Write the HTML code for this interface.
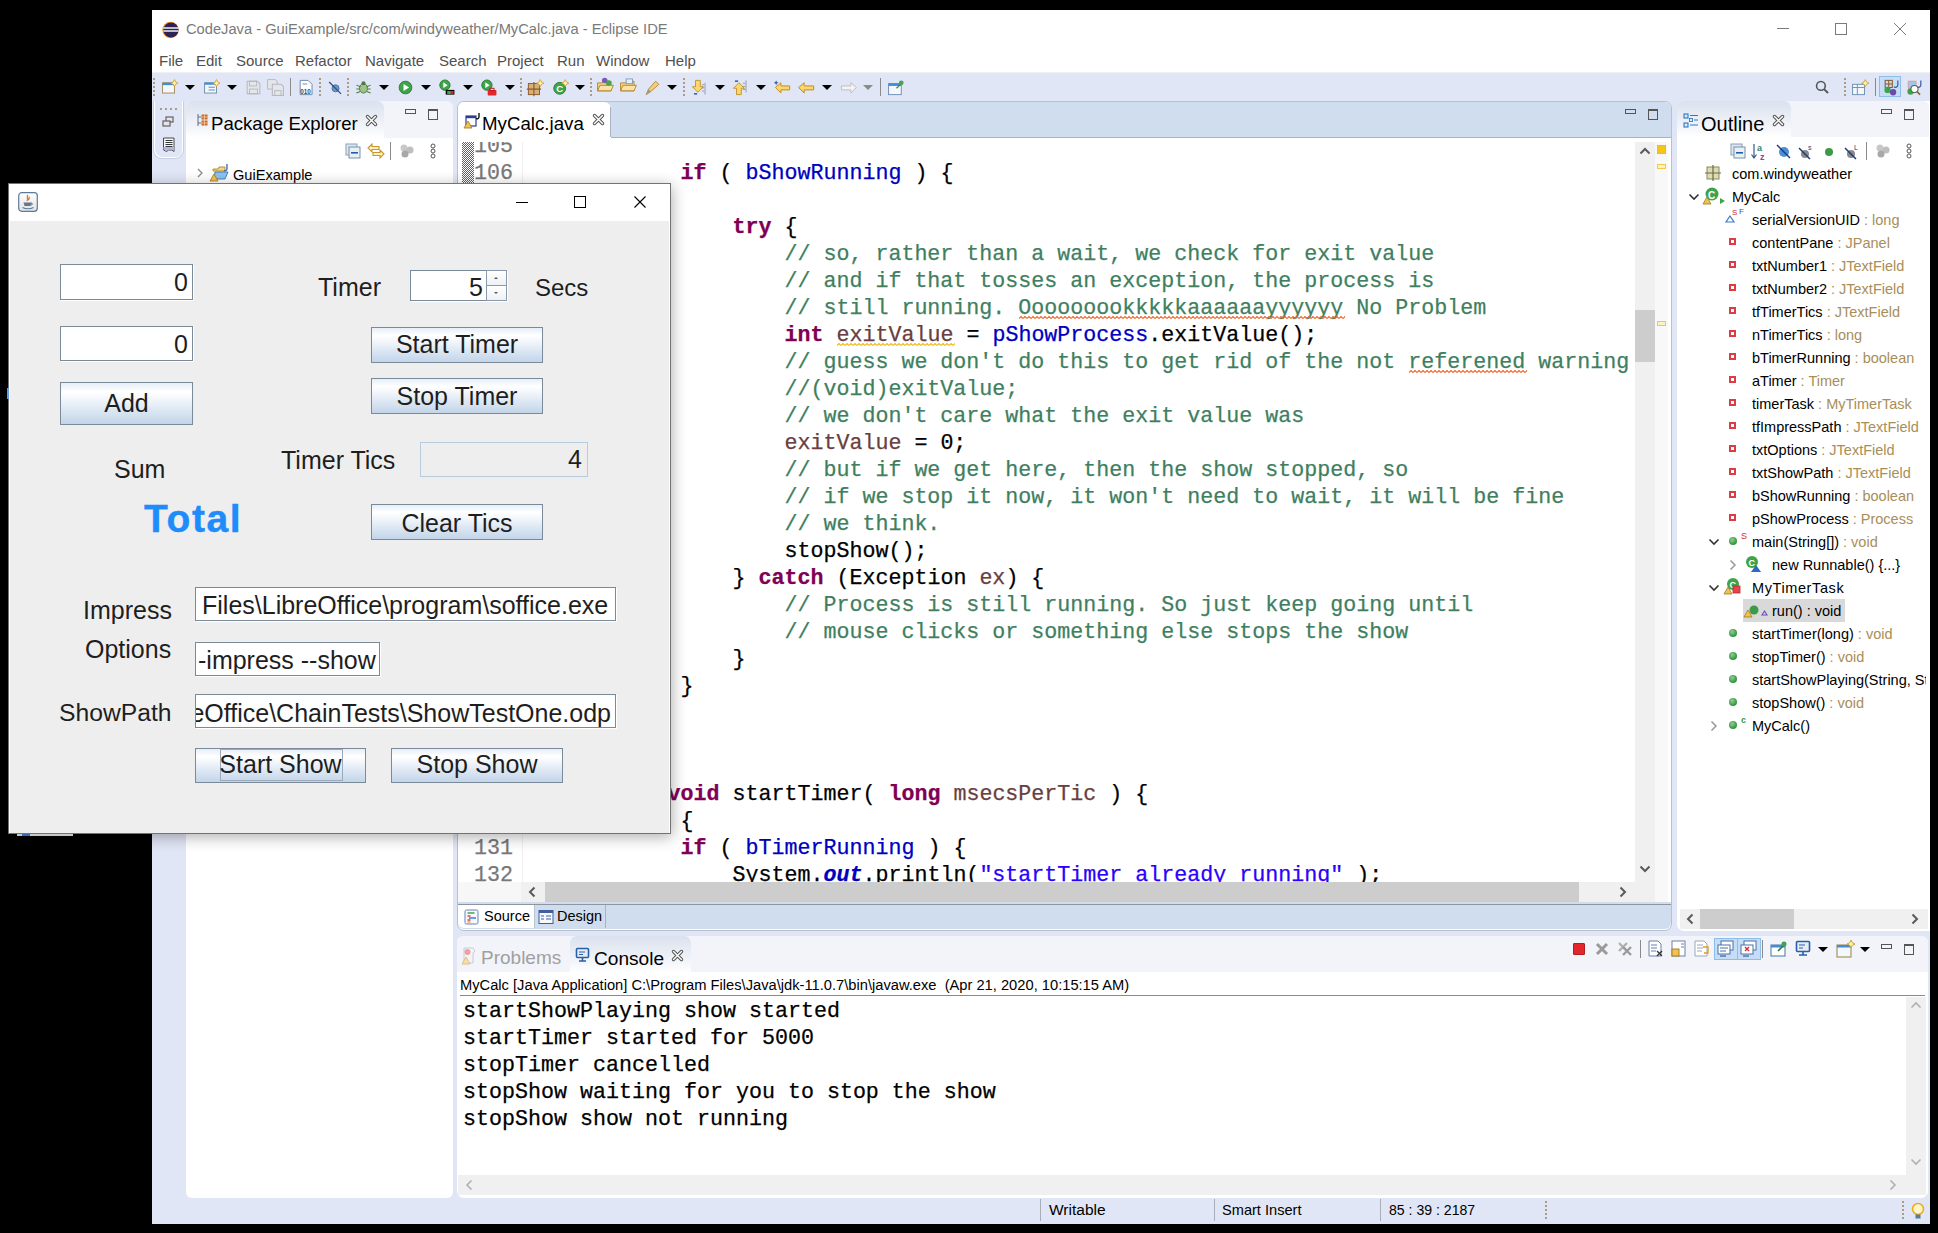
<!DOCTYPE html>
<html><head><meta charset="utf-8">
<style>
html,body{margin:0;padding:0;}
body{width:1938px;height:1233px;background:#000;position:relative;overflow:hidden;font-family:"Liberation Sans",sans-serif;}
.a{position:absolute;}
.t{position:absolute;white-space:pre;line-height:1;}
svg.i{position:absolute;overflow:visible;}
.menu{font-size:15px;color:#505050;top:53px;}
.part{background:#fff;border:1px solid #C9CED9;box-sizing:border-box;}
.ptabhdr{background:#F2F4FA;}
.seltab{background:linear-gradient(#DAE2EE,#F4F6FA 75%,#fff);}
.code{font-family:"Liberation Mono",monospace;font-size:21.67px;line-height:27px;white-space:pre;position:absolute;color:#000;-webkit-text-stroke:0.25px currentColor;}
.kw{color:#7F0055;font-weight:bold;}
.cm{color:#3F7F5F;}
.fd{color:#0000C0;}
.lv{color:#6A3E3E;}
.st{color:#2A00FF;}
.ln{color:#787878;}
.sq{}
.sqw{}
.ol{position:absolute;white-space:pre;line-height:1;font-size:14.5px;word-spacing:0px;color:#000;}
.ty{color:#A88E58;}
.dlg{font-size:25px;color:#1E1E1E;}
.tf{position:absolute;background:#fff;border:1px solid #7A8A99;box-sizing:border-box;overflow:hidden;box-shadow:1px 1px 0 #fff;}
.btn{position:absolute;border:1px solid #7A8A99;box-sizing:border-box;background:linear-gradient(#E6EEF8 0%,#FFFFFF 22%,#F2F6FB 40%,#D9E5F2 70%,#C3D5E9 100%);}
.tbsep{position:absolute;width:1px;background:#8A8A8A;}
.grip{position:absolute;width:2px;border-left:2px dotted #A79C84;}
.dd{position:absolute;width:0;height:0;border-left:5px solid transparent;border-right:5px solid transparent;border-top:5px solid #000;}

</style></head>
<body>
<!-- ECLIPSE WINDOW -->
<div class="a" style="left:152px;top:10px;width:1778px;height:1214px;background:#E1E6F6;"></div>
<div class="a" style="left:152px;top:10px;width:1778px;height:62px;background:#fff;"></div>
<div class="a" style="left:152px;top:72px;width:1778px;height:1px;background:#EEF0F6;"></div>
<!-- eclipse logo -->
<svg class="i" style="left:160px;top:20px;" width="20" height="20" viewBox="0 0 20 20">
<circle cx="10.5" cy="10" r="8.2" fill="#F7941E"/>
<circle cx="11" cy="10" r="7.6" fill="#2C2255"/>
<rect x="3.5" y="7.3" width="15" height="1.4" fill="#fff"/>
<rect x="3.5" y="10.3" width="15" height="1.4" fill="#fff"/>
</svg>
<div class="t" style="left:186px;top:22px;font-size:14.7px;color:#7a7a7a;">CodeJava - GuiExample/src/com/windyweather/MyCalc.java - Eclipse IDE</div>
<!-- window controls -->
<div class="a" style="left:1777px;top:28px;width:12px;height:1px;background:#7a7a7a;"></div>
<div class="a" style="left:1835px;top:23px;width:10px;height:10px;border:1px solid #7a7a7a;"></div>
<svg class="i" style="left:1894px;top:23px;" width="12" height="12" viewBox="0 0 12 12"><path d="M0 0L12 12M12 0L0 12" stroke="#7a7a7a" stroke-width="1"/></svg>
<!-- menu -->
<div class="t menu" style="left:159px;">File</div>
<div class="t menu" style="left:196px;">Edit</div>
<div class="t menu" style="left:236px;">Source</div>
<div class="t menu" style="left:295px;">Refactor</div>
<div class="t menu" style="left:365px;">Navigate</div>
<div class="t menu" style="left:439px;">Search</div>
<div class="t menu" style="left:497px;">Project</div>
<div class="t menu" style="left:557px;">Run</div>
<div class="t menu" style="left:596px;">Window</div>
<div class="t menu" style="left:665px;">Help</div>
<!-- status bar -->
<div class="a" style="left:1040px;top:1199px;width:1px;height:22px;background:#A8ADBA;"></div>
<div class="a" style="left:1214px;top:1199px;width:1px;height:22px;background:#A8ADBA;"></div>
<div class="a" style="left:1380px;top:1199px;width:1px;height:22px;background:#A8ADBA;"></div>
<div class="grip" style="left:1545px;top:1201px;height:18px;"></div>
<div class="grip" style="left:1902px;top:1201px;height:18px;"></div>
<div class="t" style="left:1049px;top:1202px;font-size:15.5px;color:#000;">Writable</div>
<div class="t" style="left:1222px;top:1202.5px;font-size:14.6px;color:#000;">Smart Insert</div>
<div class="t" style="left:1389px;top:1203px;font-size:14.1px;color:#000;">85 : 39 : 2187</div>
<svg class="i" style="left:1910px;top:1202px;" width="16" height="20" viewBox="0 0 16 20">
<circle cx="8" cy="7" r="5.5" fill="#FFF6C8" stroke="#F2A91E" stroke-width="1.5"/>
<rect x="5.5" y="12.5" width="5" height="4" fill="#5A7A95"/>
</svg>

<!-- MAIN TOOLBAR -->
<div class="grip" style="left:153px;top:78px;height:18px;"></div>
<!-- new wizard -->
<svg class="i" style="left:160.5px;top:77.5px;" width="19" height="19" viewBox="0 0 24 24">
<rect x="2" y="6" width="15" height="13" fill="#F4F8FC" stroke="#A08A52" stroke-width="1.2"/>
<rect x="2" y="6" width="15" height="3" fill="#3D8EDB"/>
<path d="M17 2l1.5 3 3 1.5-3 1.5-1.5 3-1.5-3-3-1.5 3-1.5z" fill="#FFF2A8" stroke="#C89A2A" stroke-width="1"/>
</svg>
<div class="dd" style="left:185px;top:85px;"></div>
<!-- new class-ish -->
<svg class="i" style="left:202.5px;top:77.5px;" width="19" height="19" viewBox="0 0 24 24">
<rect x="2" y="6" width="15" height="13" fill="#F4F8FC" stroke="#6C8FB5" stroke-width="1.2"/>
<rect x="2" y="6" width="15" height="2.5" fill="#3D8EDB"/>
<rect x="7" y="11" width="8" height="1.3" fill="#6C8FB5"/><rect x="7" y="14.5" width="8" height="1.3" fill="#6C8FB5"/>
<path d="M17 2l1.5 3 3 1.5-3 1.5-1.5 3-1.5-3-3-1.5 3-1.5z" fill="#FFF2A8" stroke="#C89A2A" stroke-width="1"/>
</svg>
<div class="dd" style="left:227px;top:85px;"></div>
<!-- save (disabled) -->
<svg class="i" style="left:243.5px;top:77.5px;" width="19" height="19" viewBox="0 0 24 24">
<path d="M4 4h13l3 3v13H4z" fill="#E4E6EC" stroke="#B6B8BE" stroke-width="1.3"/>
<rect x="7" y="4" width="9" height="6" fill="none" stroke="#B6B8BE" stroke-width="1.2"/>
<rect x="7" y="14" width="10" height="6" fill="none" stroke="#B6B8BE" stroke-width="1.2"/>
</svg>
<svg class="i" style="left:265.5px;top:77.5px;" width="19" height="19" viewBox="0 0 24 24">
<path d="M2 2h10l2 2v10H2z" fill="#E4E6EC" stroke="#B6B8BE" stroke-width="1.2"/>
<path d="M8 8h11l3 3v11H8z" fill="#E4E6EC" stroke="#B6B8BE" stroke-width="1.3"/>
<rect x="11" y="16" width="8" height="6" fill="none" stroke="#B6B8BE" stroke-width="1.2"/>
</svg>
<div class="tbsep" style="left:290px;top:78px;height:18px;"></div>
<!-- 010 -->
<svg class="i" style="left:296.5px;top:77.5px;" width="19" height="19" viewBox="0 0 24 24">
<path d="M4 3h10l5 5v13H4z" fill="#fff" stroke="#6A87A8" stroke-width="1.2"/>
<rect x="7" y="7" width="6" height="1.2" fill="#6A87A8"/>
<text x="4" y="20" font-family="Liberation Sans" font-size="8" font-weight="bold" fill="#2E4A78">010</text>
</svg>
<div class="grip" style="left:319px;top:78px;height:18px;"></div>
<!-- skip breakpoints -->
<svg class="i" style="left:325.5px;top:77.5px;" width="19" height="19" viewBox="0 0 24 24">
<circle cx="12" cy="13" r="4.5" fill="#6E93C4" stroke="#3E6AA0" stroke-width="1"/>
<path d="M4 5L19 20" stroke="#2A4F86" stroke-width="1.6"/>
</svg>
<div class="grip" style="left:347px;top:78px;height:18px;"></div>
<!-- debug -->
<svg class="i" style="left:353.5px;top:77.5px;" width="19" height="19" viewBox="0 0 24 24">
<ellipse cx="12" cy="13" rx="5" ry="6" fill="#9DC58A" stroke="#4E7A3C" stroke-width="1.2"/>
<circle cx="12" cy="6.5" r="2.5" fill="#4E7A3C"/>
<path d="M3 9l5 2M3 14h4M3 19l5-2M21 9l-5 2M21 14h-4M21 19l-5-2" stroke="#4E7A3C" stroke-width="1.3"/>
</svg>
<div class="dd" style="left:379px;top:85px;"></div>
<!-- run -->
<svg class="i" style="left:395.5px;top:77.5px;" width="19" height="19" viewBox="0 0 24 24">
<circle cx="12" cy="12" r="8" fill="#3EA34A" stroke="#27812F" stroke-width="1.2"/>
<path d="M9.5 7.5v9l7-4.5z" fill="#fff"/>
</svg>
<div class="dd" style="left:421px;top:85px;"></div>
<!-- coverage -->
<svg class="i" style="left:436.5px;top:77.5px;" width="19" height="19" viewBox="0 0 24 24">
<circle cx="10" cy="9" r="6.5" fill="#3EA34A" stroke="#27812F" stroke-width="1.2"/>
<path d="M8 5.5v7l5.5-3.5z" fill="#fff"/>
<rect x="11" y="15" width="11" height="6" fill="#000"/><rect x="13" y="16.5" width="8" height="3.5" fill="#E3262B"/><rect x="13" y="16.5" width="4" height="3.5" fill="#32B34A"/>
</svg>
<div class="dd" style="left:463px;top:85px;"></div>
<!-- external tools -->
<svg class="i" style="left:478.5px;top:77.5px;" width="19" height="19" viewBox="0 0 24 24">
<circle cx="10" cy="9" r="6.5" fill="#3EA34A" stroke="#27812F" stroke-width="1.2"/>
<path d="M8 5.5v7l5.5-3.5z" fill="#fff"/>
<rect x="11" y="15" width="11" height="7" rx="1" fill="#E3262B"/><rect x="14" y="13" width="5" height="3" fill="none" stroke="#B41C20" stroke-width="1.2"/>
</svg>
<div class="dd" style="left:505px;top:85px;"></div>
<div class="grip" style="left:520px;top:78px;height:18px;"></div>
<!-- new package -->
<svg class="i" style="left:525.5px;top:77.5px;" width="19" height="19" viewBox="0 0 24 24">
<rect x="3" y="7" width="14" height="14" fill="#D6B07A" stroke="#8C5A26" stroke-width="1.2"/>
<path d="M10 5v18M1 14h18" stroke="#8C5A26" stroke-width="1.4"/>
<path d="M18 2l1.5 3 3 1.5-3 1.5-1.5 3-1.5-3-3-1.5 3-1.5z" fill="#FFF2A8" stroke="#C89A2A" stroke-width="1"/>
</svg>
<!-- new class C -->
<svg class="i" style="left:550.5px;top:77.5px;" width="19" height="19" viewBox="0 0 24 24">
<circle cx="11" cy="13" r="7.5" fill="#3EA34A" stroke="#27812F" stroke-width="1.2"/>
<text x="6.5" y="17.5" font-family="Liberation Sans" font-size="12" font-weight="bold" fill="#fff">C</text>
<path d="M18 2l1.5 3 3 1.5-3 1.5-1.5 3-1.5-3-3-1.5 3-1.5z" fill="#FFF2A8" stroke="#C89A2A" stroke-width="1"/>
</svg>
<div class="dd" style="left:575px;top:85px;"></div>
<div class="grip" style="left:590px;top:78px;height:18px;"></div>
<!-- open type -->
<svg class="i" style="left:595.5px;top:74.5px;" width="19" height="19" viewBox="0 0 24 24">
<path d="M2 10h6l2-2h9v12H2z" fill="#F7D58E" stroke="#B3852F" stroke-width="1.2"/>
<path d="M2 20l3-7h17l-3 7z" fill="#FBE3A8" stroke="#B3852F" stroke-width="1.2"/>
<circle cx="11" cy="7" r="3.5" fill="#7A5AB5"/><circle cx="16" cy="10" r="3.5" fill="#4BA34E"/>
</svg>
<!-- open task -->
<svg class="i" style="left:618.5px;top:74.5px;" width="19" height="19" viewBox="0 0 24 24">
<path d="M2 10h6l2-2h9v12H2z" fill="#F7D58E" stroke="#B3852F" stroke-width="1.2"/>
<path d="M2 20l3-7h17l-3 7z" fill="#FBE3A8" stroke="#B3852F" stroke-width="1.2"/>
<rect x="9" y="5" width="8" height="6" fill="#E8EEF6" stroke="#6C8FB5" stroke-width="1"/>
</svg>
<!-- search pen -->
<svg class="i" style="left:642.5px;top:77.5px;" width="19" height="19" viewBox="0 0 24 24">
<path d="M4 21l3-7 9-10 4 4-10 9z" fill="#F2CD7A" stroke="#B3852F" stroke-width="1.1"/>
<path d="M4 21l3-7 3 3z" fill="#9A9A9A"/>
</svg>
<div class="dd" style="left:667px;top:85px;"></div>
<div class="grip" style="left:683px;top:78px;height:18px;"></div>
<!-- next annotation -->
<svg class="i" style="left:689.5px;top:77.5px;" width="19" height="19" viewBox="0 0 24 24">
<path d="M7 3h6v8h4l-7 7-7-7h4z" fill="#FBD86B" stroke="#C08A1E" stroke-width="1.1"/>
<rect x="5" y="19" width="4" height="2" fill="#3A63A8"/>
<path d="M19 6v15" stroke="#8090A8" stroke-width="1"/>
<rect x="15" y="8" width="3" height="1" fill="#8090A8"/><rect x="15" y="12" width="3" height="1" fill="#8090A8"/><rect x="15" y="16" width="3" height="1" fill="#8090A8"/>
</svg>
<div class="dd" style="left:715px;top:85px;"></div>
<!-- prev annotation -->
<svg class="i" style="left:730.5px;top:77.5px;" width="19" height="19" viewBox="0 0 24 24">
<path d="M7 21h6v-8h4l-7-7-7 7h4z" fill="#FBD86B" stroke="#C08A1E" stroke-width="1.1"/>
<rect x="5" y="3" width="4" height="2" fill="#3A63A8"/>
<path d="M19 3v15" stroke="#8090A8" stroke-width="1"/>
<rect x="15" y="6" width="3" height="1" fill="#8090A8"/><rect x="15" y="10" width="3" height="1" fill="#8090A8"/><rect x="15" y="14" width="3" height="1" fill="#8090A8"/>
</svg>
<div class="dd" style="left:756px;top:85px;"></div>
<!-- last edit -->
<svg class="i" style="left:772.5px;top:77.5px;" width="19" height="19" viewBox="0 0 24 24">
<path d="M3 12l7-6v4h11v5H10v4z" fill="#FBD86B" stroke="#C08A1E" stroke-width="1.2"/>
<path d="M4 3l1 2 2 1-2 1-1 2-1-2-2-1 2-1z" fill="#3A63A8"/>
</svg>
<!-- back -->
<svg class="i" style="left:796.5px;top:77.5px;" width="19" height="19" viewBox="0 0 24 24">
<path d="M2 12l7-6v4h12v5H9v4z" fill="#FBD86B" stroke="#C08A1E" stroke-width="1.2"/>
</svg>
<div class="dd" style="left:822px;top:85px;"></div>
<!-- forward disabled -->
<svg class="i" style="left:838.5px;top:77.5px;" width="19" height="19" viewBox="0 0 24 24">
<path d="M22 12l-7-6v4H3v5h12v4z" fill="#F3F3F3" stroke="#BDBDBD" stroke-width="1.2"/>
</svg>
<div class="dd" style="left:863px;top:85px;border-top-color:#8A8A8A;"></div>
<div class="tbsep" style="left:880px;top:78px;height:18px;"></div>
<!-- pin editor -->
<svg class="i" style="left:886.5px;top:77.5px;" width="19" height="19" viewBox="0 0 24 24">
<rect x="2" y="7" width="16" height="14" fill="#F4F8FC" stroke="#6C8FB5" stroke-width="1.2"/>
<rect x="2" y="7" width="16" height="3" fill="#3D8EDB"/>
<path d="M12 13l5-5" stroke="#3E7A3A" stroke-width="1.5"/><circle cx="18" cy="6" r="3" fill="#4BA34E"/>
</svg>
<!-- right side -->
<svg class="i" style="left:1812.5px;top:77.5px;" width="19" height="19" viewBox="0 0 24 24">
<circle cx="10" cy="10" r="5.5" fill="none" stroke="#555" stroke-width="2"/>
<path d="M14 14l5 5" stroke="#555" stroke-width="2.4"/>
</svg>
<div class="grip" style="left:1844px;top:78px;height:18px;"></div>
<svg class="i" style="left:1850.5px;top:77.5px;" width="19" height="19" viewBox="0 0 24 24">
<rect x="2" y="8" width="15" height="13" fill="#F4F8FC" stroke="#6C8FB5" stroke-width="1.2"/>
<path d="M2 12h15M8 8v13" stroke="#6C8FB5" stroke-width="1.2"/>
<path d="M18 2l1.5 3 3 1.5-3 1.5-1.5 3-1.5-3-3-1.5 3-1.5z" fill="#FFF2A8" stroke="#C89A2A" stroke-width="1"/>
</svg>
<div class="tbsep" style="left:1875px;top:78px;height:18px;"></div>
<div class="a" style="left:1879px;top:76px;width:22px;height:21px;background:#C5DDF6;border:1px solid #8DBDEB;box-sizing:border-box;"></div>
<svg class="i" style="left:1881.5px;top:77.5px;" width="19" height="19" viewBox="0 0 24 24">
<rect x="4" y="3" width="9" height="9" fill="none" stroke="#8C5A26" stroke-width="1.3"/><path d="M8.5 3v9M4 7.5h9" stroke="#8C5A26" stroke-width="1.3"/>
<path d="M20 3v6a3 3 0 0 1-5 2" fill="none" stroke="#3A63A8" stroke-width="1.6"/>
<circle cx="7" cy="15" r="4" fill="#3EA34A"/><circle cx="14" cy="18" r="4" fill="#6A4BA5"/>
</svg>
<svg class="i" style="left:1904.5px;top:77.5px;" width="19" height="19" viewBox="0 0 24 24">
<path d="M4 4h10v9H4z" fill="#9CC8EE" stroke="#E8928A" stroke-width="1"/>
<path d="M20 3v6a3 3 0 0 1-5 2" fill="none" stroke="#3A63A8" stroke-width="1.6"/>
<circle cx="7" cy="17" r="4" fill="#3EA34A"/>
<circle cx="12" cy="14" r="4.5" fill="#fff" stroke="#4A6A4A" stroke-width="1.3"/><path d="M15 17l4 4" stroke="#8A5A3A" stroke-width="2"/>
</svg>

<!-- LEFT TRIM STACK -->
<div class="a" style="left:153px;top:101px;width:31px;height:58px;background:#E1E6F6;border:1px solid #C9CEDC;border-top:none;border-radius:0 0 9px 9px;box-sizing:border-box;box-shadow:inset 1px -1px 0 #fff, inset -1px 0 0 #fff;"></div>
<div class="a" style="left:160px;top:107.5px;width:2px;height:2px;background:#A89E88;"></div><div class="a" style="left:165px;top:107.5px;width:2px;height:2px;background:#A89E88;"></div><div class="a" style="left:170px;top:107.5px;width:2px;height:2px;background:#A89E88;"></div><div class="a" style="left:175px;top:107.5px;width:2px;height:2px;background:#A89E88;"></div>
<svg class="i" style="left:162px;top:116px;" width="12" height="12" viewBox="0 0 12 12">
<rect x="4" y="1" width="7" height="5" fill="none" stroke="#6B6055" stroke-width="1.2"/>
<rect x="1" y="5" width="7" height="5" fill="#E1E6F6" stroke="#6B6055" stroke-width="1.2"/>
</svg>
<svg class="i" style="left:162px;top:137px;" width="14" height="16" viewBox="0 0 14 16">
<path d="M1.5 1h10.5v13.5l-2-1.5h-3.5l-2 1.5-3-1.5z" fill="#F4F4FA" stroke="#4A4A4A" stroke-width="1"/>
<path d="M1.5 10h10.5v3.5l-2-1-3.5 0-2 1.5-3-1.5z" fill="#B8B4E0"/>
<path d="M3.5 3.5h7M3.5 5.5h7M3.5 7.5h7M3.5 9.5h7" stroke="#222" stroke-width="0.9"/>
</svg>

<!-- PACKAGE EXPLORER -->
<div class="a" style="left:186px;top:101px;width:267px;height:1097px;background:#fff;border-radius:7px 7px 6px 6px;"></div>
<div class="a ptabhdr" style="left:186px;top:101px;width:267px;height:37px;border-radius:7px 7px 0 0;"></div>
<div class="a seltab" style="left:186px;top:101px;width:198px;height:37px;border-radius:7px 7px 0 0;"></div>
<!-- pkg explorer icon -->
<svg class="i" style="left:196px;top:113px;" width="14" height="14" viewBox="0 0 14 14">
<path d="M2 1v12" stroke="#5A6A8A" stroke-width="1"/><path d="M2 4h3M2 10h3" stroke="#5A6A8A" stroke-width="1"/>
<rect x="5.5" y="1.5" width="6" height="5" fill="#C86A2A"/><rect x="5.5" y="7.5" width="6" height="5" fill="#C86A2A"/>
<path d="M8.5 1.5v11M5.5 4h6M5.5 10h6" stroke="#F2D2A8" stroke-width="0.8"/>
</svg>
<div class="t" style="left:211px;top:115px;font-size:18.6px;color:#000;">Package Explorer</div>
<svg class="i" style="left:366px;top:115px;" width="11" height="11" viewBox="0 0 11 11"><path d="M1.5 1.5L9.5 9.5M9.5 1.5L1.5 9.5" stroke="#505050" stroke-width="3.4" stroke-linecap="round"/><path d="M1.5 1.5L9.5 9.5M9.5 1.5L1.5 9.5" stroke="#fff" stroke-width="1.5" stroke-linecap="round"/></svg>
<div class="a" style="left:405px;top:109px;width:9px;height:3px;border:1px solid #555;"></div>
<div class="a" style="left:428px;top:109px;width:8px;height:8px;border:1px solid #555;border-top-width:2px;"></div>
<!-- pkg toolbar -->
<svg class="i" style="left:345px;top:143px;" width="16" height="16" viewBox="0 0 16 16">
<rect x="1" y="1" width="11" height="11" fill="#DDE6EE" stroke="#8AA0B8" stroke-width="1"/>
<rect x="4" y="4" width="11" height="11" fill="#E8F0F4" stroke="#7A90AC" stroke-width="1"/>
<rect x="6" y="9" width="7" height="1.6" fill="#1F5FA8"/>
</svg>
<svg class="i" style="left:367px;top:143px;" width="18" height="16" viewBox="0 0 18 16">
<path d="M1 5l4-4v2.5h7v3H5V9z" fill="#FDF0C0" stroke="#C8962E" stroke-width="1.1"/>
<path d="M17 11l-4-4v2.5H6v3h7V15z" fill="#FDF0C0" stroke="#C8962E" stroke-width="1.1"/>
</svg>
<div class="tbsep" style="left:390px;top:142px;height:18px;"></div>
<svg class="i" style="left:399px;top:144px;" width="16" height="14" viewBox="0 0 16 14">
<circle cx="5" cy="4" r="3.5" fill="#C8C8C8"/><circle cx="11" cy="6" r="3.5" fill="#BEBEBE"/><circle cx="6" cy="10" r="3.5" fill="#A8A8A8"/>
</svg>
<svg class="i" style="left:429px;top:143px;" width="8" height="16" viewBox="0 0 8 16">
<circle cx="4" cy="3" r="2" fill="none" stroke="#555" stroke-width="1"/><circle cx="4" cy="8" r="2" fill="none" stroke="#555" stroke-width="1"/><circle cx="4" cy="13" r="2" fill="none" stroke="#555" stroke-width="1"/>
</svg>
<!-- tree -->
<svg class="i" style="left:196px;top:167px;" width="8" height="12" viewBox="0 0 8 12"><path d="M2 2l4 4-4 4" fill="none" stroke="#8A8A8A" stroke-width="1.3"/></svg>
<svg class="i" style="left:210px;top:163px;" width="20" height="20" viewBox="0 0 20 20">
<path d="M3 6h5l1-2h6v4H3z" fill="#F2D28A" stroke="#B3852F" stroke-width="0.9"/>
<path d="M5 9h13l-3 7H4z" fill="#8EC2EC" stroke="#3A78B5" stroke-width="0.9"/>
<path d="M17 1v5a2 2 0 0 1-3 1.5" fill="none" stroke="#3A63A8" stroke-width="1.3"/>
<path d="M4 11l4 7H0z" fill="#F2C14E" stroke="#A07A1E" stroke-width="0.8"/>
</svg>
<div class="t" style="left:233px;top:168px;font-size:14.6px;color:#000;">GuiExample</div>

<!-- EDITOR -->
<div class="a" style="left:457px;top:101px;width:1215px;height:830px;background:#fff;border:1px solid #B9BFCC;border-radius:7px;box-sizing:border-box;"></div>
<div class="a" style="left:458px;top:102px;width:1213px;height:36px;background:#CFDDEE;border-radius:6px 6px 0 0;"></div>
<div class="a" style="left:458px;top:137px;width:1213px;height:1px;background:#A9B3C3;"></div>
<div class="a" style="left:458px;top:102px;width:153px;height:36px;background:#fff;border-radius:6px 7px 0 0;"></div>
<div class="a" style="left:610px;top:107px;width:1px;height:30px;background:#A9B3C3;"></div>
<svg class="i" style="left:464px;top:113px;" width="18" height="18" viewBox="0 0 18 18">
<rect x="2" y="3" width="10" height="10" fill="#fff" stroke="#2A3F8F" stroke-width="1.2"/>
<rect x="2" y="3" width="10" height="2.2" fill="#2A3F8F"/>
<path d="M15 0v4a2 2 0 0 1-3 1.5" fill="none" stroke="#000" stroke-width="1.3"/>
<path d="M4 8l4 7H0z" fill="#F2C14E" stroke="#A07A1E" stroke-width="0.8"/>
</svg>
<div class="t" style="left:482px;top:114.5px;font-size:18.7px;color:#000;">MyCalc.java</div>
<svg class="i" style="left:593px;top:114px;" width="11" height="11" viewBox="0 0 11 11"><path d="M1.5 1.5L9.5 9.5M9.5 1.5L1.5 9.5" stroke="#505050" stroke-width="3.4" stroke-linecap="round"/><path d="M1.5 1.5L9.5 9.5M9.5 1.5L1.5 9.5" stroke="#fff" stroke-width="1.5" stroke-linecap="round"/></svg>
<div class="a" style="left:1625px;top:109px;width:9px;height:3px;border:1px solid #555;"></div>
<div class="a" style="left:1648px;top:109px;width:8px;height:8px;border:1px solid #555;border-top-width:2px;"></div>
<!-- range indicator -->
<div class="a" style="left:462px;top:142px;width:12px;height:48px;background-color:#fff;background-image:linear-gradient(45deg,#1C6FD0 25%,transparent 25%,transparent 75%,#1C6FD0 75%),linear-gradient(45deg,#1C6FD0 25%,transparent 25%,transparent 75%,#1C6FD0 75%);background-size:2px 2px;background-position:0 0,1px 1px;"></div>
<div class="a" style="left:522px;top:142px;width:1px;height:740px;background:#F0F0F0;"></div>
<!-- code -->
<div class="a" style="left:458px;top:142px;width:1177px;height:740px;overflow:hidden;">
<div class="code ln" style="left:16px;top:-9.5px;">105
106
   
   
   
   
   
   
   
   
   
   
   
   
   
   
   
   
   
   
   
   
   
   
   
   
131
132</div>
<div class="code" style="left:66.5px;top:-9.5px;">
            <span class="kw">if</span> ( <span class="fd">bShowRunning</span> ) {

                <span class="kw">try</span> {
<span class="cm">                    // so, rather than a wait, we check for exit value</span>
<span class="cm">                    // and if that tosses an exception, the process is</span>
<span class="cm">                    // still running. <span class="sq">Ooooooookkkkkaaaaaayyyyyy</span> No Problem</span>
                    <span class="kw">int</span> <span class="lv sqw">exitValue</span> = <span class="fd">pShowProcess</span>.exitValue();
<span class="cm">                    // guess we don't do this to get rid of the not <span class="sq">referened</span> warning</span>
<span class="cm">                    //(void)exitValue;</span>
<span class="cm">                    // we don't care what the exit value was</span>
                    <span class="lv">exitValue</span> = 0;
<span class="cm">                    // but if we get here, then the show stopped, so</span>
<span class="cm">                    // if we stop it now, it won't need to wait, it will be fine</span>
<span class="cm">                    // we think.</span>
                    stopShow();
                } <span class="kw">catch</span> (Exception <span class="lv">ex</span>) {
<span class="cm">                    // Process is still running. So just keep going until</span>
<span class="cm">                    // mouse clicks or something else stops the show</span>
                }
            }
        }


    <span class="kw">public</span> <span class="kw">void</span> startTimer( <span class="kw">long</span> <span class="lv">msecsPerTic</span> ) {
            {
            <span class="kw">if</span> ( <span class="fd">bTimerRunning</span> ) {
                System.<span class="fd" style="font-style:italic;font-weight:bold;">out</span>.println(<span class="st">"startTimer already running"</span> );
</div>
</div>
<!-- squiggles -->
<svg class="i" style="left:0;top:0;" width="0" height="0"><defs>
<pattern id="zzr" width="4" height="3" patternUnits="userSpaceOnUse"><path d="M0 2.5L2 0.5L4 2.5" stroke="#F26A30" fill="none" stroke-width="1.2"/></pattern>
<pattern id="zzy" width="4" height="3" patternUnits="userSpaceOnUse"><path d="M0 2.5L2 0.5L4 2.5" stroke="#F0BC1A" fill="none" stroke-width="1.2"/></pattern>
</defs></svg>
<svg class="i" style="left:1019px;top:316px;" width="326" height="3"><rect width="326" height="3" fill="url(#zzr)"/></svg>
<svg class="i" style="left:837px;top:343px;" width="118" height="3"><rect width="118" height="3" fill="url(#zzy)"/></svg>
<svg class="i" style="left:1409px;top:370px;" width="118" height="3"><rect width="118" height="3" fill="url(#zzr)"/></svg>
<!-- v scrollbar -->
<div class="a" style="left:1635px;top:142px;width:20px;height:740px;background:#F0F0F0;"></div>
<svg class="i" style="left:1639px;top:146px;" width="12" height="10" viewBox="0 0 12 10"><path d="M1.5 7.5L6 3l4.5 4.5" fill="none" stroke="#5A5A5A" stroke-width="2"/></svg>
<div class="a" style="left:1635px;top:310px;width:20px;height:52px;background:#CDCDCD;"></div>
<svg class="i" style="left:1639px;top:864px;" width="12" height="10" viewBox="0 0 12 10"><path d="M1.5 2.5L6 7l4.5-4.5" fill="none" stroke="#5A5A5A" stroke-width="2"/></svg>
<!-- overview ruler -->
<div class="a" style="left:1655px;top:142px;width:13px;height:760px;background:#F8F8F8;"></div>
<div class="a" style="left:1657px;top:145px;width:9px;height:9px;background:#F5C518;border:1px solid #B8B8B8;box-sizing:border-box;"></div>
<div class="a" style="left:1657px;top:164px;width:9px;height:5px;background:#FFF2C2;border:1px solid #F0C94A;box-sizing:border-box;"></div>
<div class="a" style="left:1657px;top:321px;width:9px;height:5px;background:#FFF2C2;border:1px solid #F0C94A;box-sizing:border-box;"></div>
<!-- h scrollbar -->
<div class="a" style="left:521px;top:882px;width:1134px;height:20px;background:#F0F0F0;"></div>
<div class="a" style="left:458px;top:882px;width:63px;height:20px;background:#F7F7F7;"></div>
<svg class="i" style="left:527px;top:886px;" width="10" height="12" viewBox="0 0 10 12"><path d="M7.5 1.5L3 6l4.5 4.5" fill="none" stroke="#5A5A5A" stroke-width="2"/></svg>
<div class="a" style="left:545px;top:882px;width:1034px;height:20px;background:#CDCDCD;"></div>
<svg class="i" style="left:1618px;top:886px;" width="10" height="12" viewBox="0 0 10 12"><path d="M2.5 1.5L7 6l-4.5 4.5" fill="none" stroke="#5A5A5A" stroke-width="2"/></svg>
<!-- source/design tabs -->
<div class="a" style="left:458px;top:902px;width:1213px;height:27px;background:#CFDDEE;border-radius:0 0 6px 6px;"></div>
<div class="a" style="left:458px;top:904px;width:1213px;height:1px;background:#8E959F;"></div>
<div class="a" style="left:458px;top:905px;width:76px;height:23px;background:#fff;border-right:1px solid #B9C3D0;border-radius:0 0 0 6px;"></div>
<div class="a" style="left:535px;top:905px;width:70px;height:23px;border-right:1px solid #A9B3C3;"></div>
<svg class="i" style="left:464px;top:909px;" width="16" height="16" viewBox="0 0 16 16">
<rect x="1" y="1" width="13" height="14" rx="1.5" fill="#F6F8FC" stroke="#6A80B8" stroke-width="1"/>
<path d="M3.5 4h7" stroke="#1E9A3A" stroke-width="1.3"/><path d="M3.5 7h3" stroke="#D9262A" stroke-width="1.3"/><path d="M5 9h7" stroke="#1E6AD9" stroke-width="1.3"/><path d="M3.5 11h3" stroke="#D9262A" stroke-width="1.3"/><path d="M3.5 13h3" stroke="#E8A21E" stroke-width="1.3"/>
</svg>
<div class="t" style="left:484px;top:909px;font-size:14.5px;color:#000;">Source</div>
<svg class="i" style="left:538px;top:909px;" width="16" height="16" viewBox="0 0 16 16">
<rect x="1" y="1.5" width="14" height="13" fill="#F6F8FC" stroke="#3E5E9E" stroke-width="1"/>
<rect x="1" y="1.5" width="14" height="2.5" fill="#3E5E9E"/>
<path d="M3 7h3M3 10h3M8 7h5M8 10h5" stroke="#3E5E9E" stroke-width="1.1"/>
</svg>
<div class="t" style="left:557px;top:909px;font-size:14.5px;color:#000;">Design</div>

<!-- OUTLINE -->
<div class="a" style="left:1677px;top:101px;width:253px;height:830px;background:#fff;border-radius:7px 0 0 7px;box-sizing:border-box;"></div>
<div class="a ptabhdr" style="left:1677px;top:101px;width:252px;height:36px;border-radius:6px 6px 0 0;"></div>
<div class="a seltab" style="left:1677px;top:101px;width:114px;height:36px;border-radius:6px 7px 0 0;"></div>
<svg class="i" style="left:1683px;top:113px;" width="16" height="16" viewBox="0 0 16 16">
<rect x="1" y="1" width="4" height="4" fill="#D6E8F8" stroke="#2A78C8" stroke-width="1.1"/>
<rect x="1" y="10" width="4" height="4" fill="#D6E8F8" stroke="#2A78C8" stroke-width="1.1"/>
<rect x="6.5" y="5.5" width="3" height="3" fill="none" stroke="#2A78C8" stroke-width="0.9"/>
<path d="M7 2.5h8M11 7h4M7 12h8" stroke="#2A78C8" stroke-width="1.1"/>
</svg>
<div class="t" style="left:1701px;top:113.5px;font-size:20px;color:#000;">Outline</div>
<svg class="i" style="left:1773px;top:115px;" width="11" height="11" viewBox="0 0 11 11"><path d="M1.5 1.5L9.5 9.5M9.5 1.5L1.5 9.5" stroke="#505050" stroke-width="3.4" stroke-linecap="round"/><path d="M1.5 1.5L9.5 9.5M9.5 1.5L1.5 9.5" stroke="#fff" stroke-width="1.5" stroke-linecap="round"/></svg>
<div class="a" style="left:1881px;top:109px;width:9px;height:3px;border:1px solid #555;"></div>
<div class="a" style="left:1904px;top:109px;width:8px;height:8px;border:1px solid #555;border-top-width:2px;"></div>
<!-- outline toolbar -->
<svg class="i" style="left:1730px;top:143px;" width="16" height="16" viewBox="0 0 16 16">
<rect x="1" y="1" width="11" height="11" fill="#DDE6EE" stroke="#8AA0B8" stroke-width="1"/>
<rect x="4" y="4" width="11" height="11" fill="#E8F0F4" stroke="#7A90AC" stroke-width="1"/>
<rect x="6" y="9" width="7" height="1.6" fill="#1F5FA8"/>
</svg>
<svg class="i" style="left:1751px;top:143px;" width="18" height="18" viewBox="0 0 18 18">
<path d="M3 1v13M0.5 11.5L3 15l2.5-3.5" fill="none" stroke="#3A5A8A" stroke-width="1.2"/>
<text x="6" y="8" font-family="Liberation Sans" font-size="9" font-weight="bold" fill="#1E8A7A">a</text>
<text x="9" y="17" font-family="Liberation Sans" font-size="9" font-weight="bold" fill="#A03AA8">z</text>
</svg>
<svg class="i" style="left:1775px;top:143px;" width="18" height="18" viewBox="0 0 18 18">
<circle cx="9" cy="9" r="5" fill="#4A90D9"/><path d="M2 2l13 13" stroke="#1E3A78" stroke-width="1.5"/>
</svg>
<svg class="i" style="left:1797px;top:143px;" width="18" height="18" viewBox="0 0 18 18">
<circle cx="8" cy="11" r="4" fill="#8A8A8A"/><path d="M2 5l11 11" stroke="#1E3A78" stroke-width="1.5"/>
<text x="11" y="7" font-family="Liberation Sans" font-size="7" fill="#1E3A78">s</text>
</svg>
<svg class="i" style="left:1823px;top:146px;" width="12" height="12" viewBox="0 0 12 12">
<circle cx="6" cy="6" r="4" fill="#3C9A48"/>
</svg>
<svg class="i" style="left:1843px;top:143px;" width="18" height="18" viewBox="0 0 18 18">
<circle cx="8" cy="11" r="4" fill="#8A8A8A"/><path d="M2 5l11 11" stroke="#1E3A78" stroke-width="1.5"/>
<text x="11" y="7" font-family="Liberation Sans" font-size="7" fill="#1E3A78">L</text>
</svg>
<div class="tbsep" style="left:1866px;top:142px;height:18px;"></div>
<svg class="i" style="left:1875px;top:144px;" width="16" height="14" viewBox="0 0 16 14">
<circle cx="5" cy="4" r="3.5" fill="#C8C8C8"/><circle cx="11" cy="6" r="3.5" fill="#BEBEBE"/><circle cx="6" cy="10" r="3.5" fill="#A8A8A8"/>
</svg>
<svg class="i" style="left:1905px;top:143px;" width="8" height="16" viewBox="0 0 8 16">
<circle cx="4" cy="3" r="2" fill="none" stroke="#555" stroke-width="1"/><circle cx="4" cy="8" r="2" fill="none" stroke="#555" stroke-width="1"/><circle cx="4" cy="13" r="2" fill="none" stroke="#555" stroke-width="1"/>
</svg>
<!-- tree -->
<svg class="i" style="left:1704px;top:164px;" width="18" height="18" viewBox="0 0 18 18">
<rect x="3" y="3" width="12" height="12" fill="#DCDCB4" stroke="#8A8A5A" stroke-width="1"/>
<path d="M9 1v16M1 9h16" stroke="#6A6A4A" stroke-width="1.2"/>
</svg>
<div class="ol" style="left:1732px;top:167px;">com.windyweather</div>

<svg class="i" style="left:1688px;top:193px;" width="12" height="8" viewBox="0 0 12 8"><path d="M1.5 1.5L6 6l4.5-4.5" fill="none" stroke="#333" stroke-width="1.6"/></svg>
<svg class="i" style="left:1702px;top:186px;" width="26" height="20" viewBox="0 0 26 20">
<circle cx="10" cy="8" r="6.5" fill="#3EA34A"/><text x="6" y="12.5" font-family="Liberation Sans" font-size="10" font-weight="bold" fill="#fff">C</text>
<path d="M5 11l4 7H1z" fill="#F2C14E" stroke="#A07A1E" stroke-width="0.8"/>
<path d="M18 12v6l5-3z" fill="#3EA34A"/>
</svg>
<div class="ol" style="left:1732px;top:190px;">MyCalc</div>
<svg class="i" style="left:1727px;top:207px;" width="20" height="16" viewBox="0 0 20 16">
<path d="M3 9l4 6H-1z" fill="none" stroke="#3A78C8" stroke-width="1.2"/>
<text x="5" y="8" font-family="Liberation Sans" font-size="8" fill="#D9262A">S</text>
<text x="12" y="7" font-family="Liberation Sans" font-size="8" fill="#2A5A9A">F</text>
</svg>
<div class="ol" style="left:1752px;top:213px;">serialVersionUID<span class="ty"> : long</span></div>

<div class="a" style="left:1729px;top:238px;width:7px;height:7px;border:2px solid #DC3C44;box-sizing:border-box;background:#fff;"></div>
<div class="ol" style="left:1752px;top:236px;">contentPane<span class="ty"> : JPanel</span></div>
<div class="a" style="left:1729px;top:261px;width:7px;height:7px;border:2px solid #DC3C44;box-sizing:border-box;background:#fff;"></div>
<div class="ol" style="left:1752px;top:259px;">txtNumber1<span class="ty"> : JTextField</span></div>
<div class="a" style="left:1729px;top:284px;width:7px;height:7px;border:2px solid #DC3C44;box-sizing:border-box;background:#fff;"></div>
<div class="ol" style="left:1752px;top:282px;">txtNumber2<span class="ty"> : JTextField</span></div>
<div class="a" style="left:1729px;top:307px;width:7px;height:7px;border:2px solid #DC3C44;box-sizing:border-box;background:#fff;"></div>
<div class="ol" style="left:1752px;top:305px;">tfTimerTics<span class="ty"> : JTextField</span></div>
<div class="a" style="left:1729px;top:330px;width:7px;height:7px;border:2px solid #DC3C44;box-sizing:border-box;background:#fff;"></div>
<div class="ol" style="left:1752px;top:328px;">nTimerTics<span class="ty"> : long</span></div>
<div class="a" style="left:1729px;top:353px;width:7px;height:7px;border:2px solid #DC3C44;box-sizing:border-box;background:#fff;"></div>
<div class="ol" style="left:1752px;top:351px;">bTimerRunning<span class="ty"> : boolean</span></div>
<div class="a" style="left:1729px;top:376px;width:7px;height:7px;border:2px solid #DC3C44;box-sizing:border-box;background:#fff;"></div>
<div class="ol" style="left:1752px;top:374px;">aTimer<span class="ty"> : Timer</span></div>
<div class="a" style="left:1729px;top:399px;width:7px;height:7px;border:2px solid #DC3C44;box-sizing:border-box;background:#fff;"></div>
<div class="ol" style="left:1752px;top:397px;">timerTask<span class="ty"> : MyTimerTask</span></div>
<div class="a" style="left:1729px;top:422px;width:7px;height:7px;border:2px solid #DC3C44;box-sizing:border-box;background:#fff;"></div>
<div class="ol" style="left:1752px;top:420px;">tfImpressPath<span class="ty"> : JTextField</span></div>
<div class="a" style="left:1729px;top:445px;width:7px;height:7px;border:2px solid #DC3C44;box-sizing:border-box;background:#fff;"></div>
<div class="ol" style="left:1752px;top:443px;">txtOptions<span class="ty"> : JTextField</span></div>
<div class="a" style="left:1729px;top:468px;width:7px;height:7px;border:2px solid #DC3C44;box-sizing:border-box;background:#fff;"></div>
<div class="ol" style="left:1752px;top:466px;">txtShowPath<span class="ty"> : JTextField</span></div>
<div class="a" style="left:1729px;top:491px;width:7px;height:7px;border:2px solid #DC3C44;box-sizing:border-box;background:#fff;"></div>
<div class="ol" style="left:1752px;top:489px;">bShowRunning<span class="ty"> : boolean</span></div>
<div class="a" style="left:1729px;top:514px;width:7px;height:7px;border:2px solid #DC3C44;box-sizing:border-box;background:#fff;"></div>
<div class="ol" style="left:1752px;top:512px;">pShowProcess<span class="ty"> : Process</span></div>
<svg class="i" style="left:1708px;top:538px;" width="12" height="8" viewBox="0 0 12 8"><path d="M1.5 1.5L6 6l4.5-4.5" fill="none" stroke="#333" stroke-width="1.6"/></svg>
<div class="a" style="left:1729px;top:537px;width:8px;height:8px;border-radius:50%;background:radial-gradient(circle at 40% 35%,#8FD08F,#3C9A48 60%,#2C7A36);"></div>
<div class="ol" style="left:1752px;top:535px;">main(String[])<span class="ty"> : void</span></div>
<div class="t" style="left:1741px;top:532px;font-size:9px;color:#D9262A;">S</div>
<svg class="i" style="left:1729px;top:559px;" width="8" height="12" viewBox="0 0 8 12"><path d="M1.5 1.5L6 6l-4.5 4.5" fill="none" stroke="#999" stroke-width="1.5"/></svg>
<svg class="i" style="left:1745px;top:555px;" width="18" height="18" viewBox="0 0 18 18">
<circle cx="7" cy="7" r="6" fill="#3EA34A"/><text x="3.5" y="11" font-family="Liberation Sans" font-size="9" font-weight="bold" fill="#fff">C</text>
<path d="M11 10l5 7H6z" fill="#2A6AC0"/>
</svg>
<div class="ol" style="left:1772px;top:558px;">new Runnable() {...}</div>
<svg class="i" style="left:1708px;top:584px;" width="12" height="8" viewBox="0 0 12 8"><path d="M1.5 1.5L6 6l4.5-4.5" fill="none" stroke="#333" stroke-width="1.6"/></svg>
<svg class="i" style="left:1724px;top:577px;" width="18" height="18" viewBox="0 0 18 18">
<circle cx="9" cy="7" r="6" fill="#3EA34A"/><text x="5.5" y="11" font-family="Liberation Sans" font-size="9" font-weight="bold" fill="#fff">C</text>
<rect x="9" y="9" width="7" height="7" fill="#E8434A" stroke="#B02A30" stroke-width="0.8"/>
<path d="M4 10l4 7H0z" fill="#F2C14E" stroke="#A07A1E" stroke-width="0.8"/>
</svg>
<div class="ol" style="left:1752px;top:581px;letter-spacing:0.6px;">MyTimerTask</div>
<div class="a" style="left:1743px;top:599px;width:102px;height:23px;background:#D9D9D9;"></div>
<svg class="i" style="left:1744px;top:602px;" width="26" height="18" viewBox="0 0 26 18">
<circle cx="10" cy="8" r="4.5" fill="#3C9A48"/>
<path d="M4 8l4 7H0z" fill="#F2C14E" stroke="#A07A1E" stroke-width="0.8"/>
<path d="M18 13l2.5-4 2.5 4z" fill="none" stroke="#6A4BC5" stroke-width="1.1"/>
</svg>
<div class="ol" style="left:1772px;top:604px;">run() : void</div>
<div class="a" style="left:1729px;top:629px;width:8px;height:8px;border-radius:50%;background:radial-gradient(circle at 40% 35%,#8FD08F,#3C9A48 60%,#2C7A36);"></div>
<div class="ol" style="left:1752px;top:627px;">startTimer(long)<span class="ty"> : void</span></div>
<div class="a" style="left:1729px;top:652px;width:8px;height:8px;border-radius:50%;background:radial-gradient(circle at 40% 35%,#8FD08F,#3C9A48 60%,#2C7A36);"></div>
<div class="ol" style="left:1752px;top:650px;">stopTimer()<span class="ty"> : void</span></div>
<div class="a" style="left:1729px;top:675px;width:8px;height:8px;border-radius:50%;background:radial-gradient(circle at 40% 35%,#8FD08F,#3C9A48 60%,#2C7A36);"></div>
<div class="ol" style="left:1752px;top:673px;width:174px;overflow:hidden;">startShowPlaying(String, St</div>
<div class="a" style="left:1729px;top:698px;width:8px;height:8px;border-radius:50%;background:radial-gradient(circle at 40% 35%,#8FD08F,#3C9A48 60%,#2C7A36);"></div>
<div class="ol" style="left:1752px;top:696px;">stopShow()<span class="ty"> : void</span></div>
<svg class="i" style="left:1710px;top:720px;" width="8" height="12" viewBox="0 0 8 12"><path d="M1.5 1.5L6 6l-4.5 4.5" fill="none" stroke="#999" stroke-width="1.5"/></svg>
<div class="a" style="left:1729px;top:721px;width:8px;height:8px;border-radius:50%;background:radial-gradient(circle at 40% 35%,#8FD08F,#3C9A48 60%,#2C7A36);"></div>
<div class="ol" style="left:1752px;top:719px;">MyCalc()</div>
<div class="t" style="left:1741px;top:716px;font-size:9px;color:#2E9A3E;font-weight:bold;">c</div>
<!-- outline h scroll -->
<div class="a" style="left:1680px;top:909px;width:248px;height:20px;background:#F0F0F0;"></div>
<div class="a" style="left:1700px;top:909px;width:94px;height:20px;background:#CDCDCD;"></div>
<svg class="i" style="left:1685px;top:913px;" width="10" height="12" viewBox="0 0 10 12"><path d="M7.5 1.5L3 6l4.5 4.5" fill="none" stroke="#5A5A5A" stroke-width="2"/></svg>
<svg class="i" style="left:1910px;top:913px;" width="10" height="12" viewBox="0 0 10 12"><path d="M2.5 1.5L7 6l-4.5 4.5" fill="none" stroke="#5A5A5A" stroke-width="2"/></svg>

<!-- CONSOLE -->
<div class="a" style="left:457px;top:936px;width:1471px;height:262px;background:#fff;border-radius:7px;box-sizing:border-box;"></div>
<div class="a ptabhdr" style="left:457px;top:936px;width:1471px;height:36px;border-radius:6px 6px 0 0;"></div>
<div class="a seltab" style="left:570px;top:936px;width:121px;height:36px;border-radius:7px 7px 0 0;"></div>
<svg class="i" style="left:461px;top:947px;" width="16" height="18" viewBox="0 0 16 18">
<path d="M3 1h9l2 3-2 2v10H3z" fill="#F3F4F8" stroke="#C9CCD8" stroke-width="1"/>
<circle cx="6.5" cy="5" r="3" fill="#F0A0A0"/>
<path d="M5 10l4 7H1z" fill="#F4DFA8" stroke="#D9B870" stroke-width="0.8"/>
</svg>
<div class="t" style="left:481px;top:948px;font-size:19px;color:#A0A0A0;">Problems</div>
<svg class="i" style="left:575px;top:947px;" width="16" height="16" viewBox="0 0 16 16">
<rect x="1.5" y="1.5" width="12" height="9" rx="1" fill="#E4ECF6" stroke="#2A5FA8" stroke-width="1.6"/>
<path d="M4 5h6M4 7.5h4" stroke="#2A5FA8" stroke-width="1"/>
<path d="M4 14h7M7.5 10.5v3" stroke="#2A5FA8" stroke-width="1.6"/>
</svg>
<div class="t" style="left:594px;top:948.5px;font-size:19.1px;color:#000;">Console</div>
<svg class="i" style="left:672px;top:950px;" width="11" height="11" viewBox="0 0 11 11"><path d="M1.5 1.5L9.5 9.5M9.5 1.5L1.5 9.5" stroke="#505050" stroke-width="3.4" stroke-linecap="round"/><path d="M1.5 1.5L9.5 9.5M9.5 1.5L1.5 9.5" stroke="#fff" stroke-width="1.5" stroke-linecap="round"/></svg>
<!-- console toolbar -->
<div class="a" style="left:1573px;top:943px;width:12px;height:12px;background:#E3262B;border:1px solid #B01E22;box-sizing:border-box;border-radius:1px;"></div>
<svg class="i" style="left:1595px;top:942px;" width="14" height="14" viewBox="0 0 14 14"><path d="M2 2L12 12M12 2L2 12" stroke="#9A9A9A" stroke-width="3"/></svg>
<svg class="i" style="left:1617px;top:941px;" width="16" height="16" viewBox="0 0 16 16"><path d="M2 2L10 10M10 2L2 10" stroke="#B0B0B0" stroke-width="2.4"/><path d="M6 6L14 14M14 6L6 14" stroke="#9A9A9A" stroke-width="2.4"/></svg>
<div class="tbsep" style="left:1640px;top:940px;height:18px;"></div>
<svg class="i" style="left:1647px;top:940px;" width="18" height="18" viewBox="0 0 18 18">
<path d="M2 1h9l3 3v12H2z" fill="#fff" stroke="#6A80A8" stroke-width="1"/>
<path d="M4 5h6M4 8h6M4 11h5" stroke="#6A80A8" stroke-width="1"/>
<path d="M10 11l5 5M15 11l-5 5" stroke="#333" stroke-width="1.3"/>
</svg>
<svg class="i" style="left:1670px;top:940px;" width="18" height="18" viewBox="0 0 18 18">
<rect x="2" y="1" width="13" height="15" fill="#fff" stroke="#6A80A8" stroke-width="1"/>
<rect x="2" y="9" width="7" height="7" fill="#F2C14E" stroke="#A07A1E" stroke-width="0.9"/>
<path d="M11 4h3M11 7h3" stroke="#6A80A8" stroke-width="1"/>
</svg>
<svg class="i" style="left:1693px;top:940px;" width="18" height="18" viewBox="0 0 18 18">
<path d="M2 1h9l3 3v12H2z" fill="#fff" stroke="#9AA8C0" stroke-width="1"/>
<path d="M4 5h6M4 8h6M4 11h5" stroke="#9AA8C0" stroke-width="1"/>
<path d="M10 7h5v6h-4" fill="none" stroke="#E0A020" stroke-width="1.4"/>
</svg>
<div class="a" style="left:1714px;top:938px;width:24px;height:22px;background:#C5DDF6;border:1px solid #8DBDEB;box-sizing:border-box;"></div>
<div class="a" style="left:1737px;top:938px;width:24px;height:22px;background:#C5DDF6;border:1px solid #8DBDEB;box-sizing:border-box;"></div>
<svg class="i" style="left:1717px;top:940px;" width="18" height="18" viewBox="0 0 18 18">
<rect x="4" y="1" width="12" height="9" fill="#fff" stroke="#4A70A8" stroke-width="1"/>
<rect x="1" y="5" width="12" height="9" fill="#fff" stroke="#4A70A8" stroke-width="1"/>
<path d="M3 8h8M3 11h6" stroke="#4A70A8" stroke-width="1"/><path d="M3 16h6" stroke="#4A70A8" stroke-width="1.4"/>
</svg>
<svg class="i" style="left:1740px;top:940px;" width="18" height="18" viewBox="0 0 18 18">
<rect x="4" y="1" width="12" height="9" fill="#fff" stroke="#4A70A8" stroke-width="1"/>
<rect x="1" y="5" width="12" height="9" fill="#fff" stroke="#4A70A8" stroke-width="1"/>
<path d="M5 7l4 4M9 7l-4 4" stroke="#D9262A" stroke-width="1.3"/><path d="M3 16h6" stroke="#4A70A8" stroke-width="1.4"/>
</svg>
<div class="tbsep" style="left:1762px;top:940px;height:18px;"></div>
<svg class="i" style="left:1770px;top:940px;" width="18" height="18" viewBox="0 0 18 18">
<rect x="1" y="5" width="14" height="11" fill="#fff" stroke="#4A70A8" stroke-width="1"/>
<rect x="1" y="5" width="14" height="2.5" fill="#3D8EDB"/>
<path d="M8 11l6-6" stroke="#2E7A3A" stroke-width="1.6"/><circle cx="14" cy="4" r="2.5" fill="#3EA34A"/>
</svg>
<svg class="i" style="left:1795px;top:940px;" width="18" height="18" viewBox="0 0 18 18">
<rect x="1.5" y="1.5" width="13" height="10" rx="1" fill="#E4ECF6" stroke="#2A5FA8" stroke-width="1.6"/>
<path d="M4 5h6M4 8h4" stroke="#2A5FA8" stroke-width="1"/>
<path d="M4 15h8M8 11.5v3" stroke="#2A5FA8" stroke-width="1.6"/>
</svg>
<div class="dd" style="left:1818px;top:947px;"></div>
<svg class="i" style="left:1836px;top:940px;" width="20" height="18" viewBox="0 0 20 18">
<rect x="1" y="5" width="14" height="12" fill="#F4F8FC" stroke="#A08A52" stroke-width="1.1"/>
<rect x="1" y="5" width="14" height="2.5" fill="#3D8EDB"/>
<path d="M15 0l1.3 2.7 2.7 1.3-2.7 1.3-1.3 2.7-1.3-2.7-2.7-1.3 2.7-1.3z" fill="#FFF2A8" stroke="#C89A2A" stroke-width="0.9"/>
</svg>
<div class="dd" style="left:1860px;top:947px;"></div>
<div class="a" style="left:1881px;top:944px;width:9px;height:3px;border:1px solid #555;"></div>
<div class="a" style="left:1904px;top:944px;width:8px;height:8px;border:1px solid #555;border-top-width:2px;"></div>
<!-- description -->
<div class="t" style="left:460px;top:978px;font-size:14.7px;color:#000;">MyCalc [Java Application] C:\Program Files\Java\jdk-11.0.7\bin\javaw.exe  (Apr 21, 2020, 10:15:15 AM)</div>
<div class="a" style="left:460px;top:995px;width:1465px;height:1px;background:#8A8A8A;"></div>
<!-- output -->
<div class="code" style="left:463px;top:998px;">startShowPlaying show started
startTimer started for 5000
stopTimer cancelled
stopShow waiting for you to stop the show
stopShow show not running</div>
<!-- console v scroll -->
<div class="a" style="left:1906px;top:997px;width:20px;height:178px;background:#F0F0F0;"></div>
<svg class="i" style="left:1910px;top:1000px;" width="12" height="10" viewBox="0 0 12 10"><path d="M1.5 7.5L6 3l4.5 4.5" fill="none" stroke="#B0B0B0" stroke-width="1.6"/></svg>
<svg class="i" style="left:1910px;top:1157px;" width="12" height="10" viewBox="0 0 12 10"><path d="M1.5 2.5L6 7l4.5-4.5" fill="none" stroke="#B0B0B0" stroke-width="1.6"/></svg>
<div class="a" style="left:458px;top:1175px;width:1468px;height:20px;background:#F0F0F0;"></div>
<svg class="i" style="left:464px;top:1179px;" width="10" height="12" viewBox="0 0 10 12"><path d="M7.5 1.5L3 6l4.5 4.5" fill="none" stroke="#B0B0B0" stroke-width="1.6"/></svg>
<svg class="i" style="left:1888px;top:1179px;" width="10" height="12" viewBox="0 0 10 12"><path d="M2.5 1.5L7 6l-4.5 4.5" fill="none" stroke="#B0B0B0" stroke-width="1.6"/></svg>

<!-- JAVA DIALOG -->
<div class="a" style="left:8px;top:183px;width:663px;height:651px;border:1px solid rgba(0,0,0,0.55);box-sizing:border-box;background:#fff;box-shadow:1px 3px 14px rgba(0,0,0,0.32);"></div>
<div class="a" style="left:10px;top:221px;width:659px;height:612px;background:#EEEEEE;"></div>
<div class="a" style="left:7px;top:388px;width:2px;height:11px;background:#5AA0E8;"></div>
<div class="a" style="left:17px;top:834px;width:56px;height:2px;background:#C8C8C8;"></div>
<div class="a" style="left:22px;top:834px;width:8px;height:2px;background:#3A6AB0;"></div>
<!-- java icon -->
<svg class="i" style="left:18px;top:192px;" width="20" height="20" viewBox="0 0 20 20">
<defs><linearGradient id="jg" x1="0" y1="0" x2="0" y2="1"><stop offset="0" stop-color="#fff"/><stop offset="1" stop-color="#E2E2E2"/></linearGradient></defs>
<rect x="0.7" y="0.7" width="18.6" height="18.6" rx="3" fill="url(#jg)" stroke="#5E7A98" stroke-width="1.2"/>
<path d="M10 3c-2 2 1 3-1 6M11 5c1 1-1 2 0 3" fill="none" stroke="#E8762A" stroke-width="1.4"/>
<path d="M5.5 10.5h8l-1 3.5h-6z" fill="#5E7A98"/>
<path d="M13 11c2 0 2 2 0 2" fill="none" stroke="#5E7A98" stroke-width="1"/>
<path d="M4.5 15.5c3 1.5 8 1.5 11 0" fill="none" stroke="#5E7A98" stroke-width="1.2"/>
</svg>
<div class="a" style="left:516px;top:202px;width:12px;height:1px;background:#000;"></div>
<div class="a" style="left:574px;top:196px;width:10px;height:10px;border:1px solid #000;"></div>
<svg class="i" style="left:634px;top:196px;" width="12" height="12" viewBox="0 0 12 12"><path d="M0.5 0.5L11.5 11.5M11.5 0.5L0.5 11.5" stroke="#000" stroke-width="1.1"/></svg>

<!-- text fields -->
<div class="tf" style="left:60px;top:264px;width:133px;height:36px;"></div>
<div class="t dlg" style="left:60px;top:270px;width:128px;text-align:right;">0</div>
<div class="tf" style="left:60px;top:326px;width:133px;height:35px;"></div>
<div class="t dlg" style="left:60px;top:332px;width:128px;text-align:right;">0</div>
<div class="btn" style="left:60px;top:382px;width:133px;height:43px;"></div>
<div class="t dlg" style="left:60px;top:391px;width:133px;text-align:center;">Add</div>

<div class="t dlg" style="left:318px;top:275px;">Timer</div>
<div class="tf" style="left:410px;top:270px;width:97px;height:31px;"></div>
<div class="t dlg" style="left:410px;top:275px;width:73px;text-align:right;">5</div>
<div class="a" style="left:486px;top:270px;width:21px;height:16px;border:1px solid #8A9AAA;box-sizing:border-box;background:linear-gradient(#fff,#EDF1F6);"></div>
<div class="a" style="left:486px;top:285px;width:21px;height:16px;border:1px solid #8A9AAA;box-sizing:border-box;background:linear-gradient(#fff,#EDF1F6);"></div>
<div class="a" style="left:494px;top:277px;width:0;height:0;border-left:2px solid transparent;border-right:2px solid transparent;border-bottom:2px solid #555;"></div>
<div class="a" style="left:494px;top:292px;width:0;height:0;border-left:2px solid transparent;border-right:2px solid transparent;border-top:2px solid #555;"></div>
<div class="t dlg" style="left:535px;top:275.5px;font-size:24px;">Secs</div>

<div class="btn" style="left:371px;top:327px;width:172px;height:36px;"></div>
<div class="t dlg" style="left:371px;top:332px;width:172px;text-align:center;">Start Timer</div>
<div class="btn" style="left:371px;top:378px;width:172px;height:36px;"></div>
<div class="t dlg" style="left:371px;top:384px;width:172px;text-align:center;">Stop Timer</div>

<div class="t dlg" style="left:114px;top:457px;">Sum</div>
<div class="t dlg" style="left:281px;top:448px;">Timer Tics</div>
<div class="a" style="left:420px;top:442px;width:168px;height:35px;border:1px solid #B8CCE0;box-sizing:border-box;"></div>
<div class="t dlg" style="left:420px;top:447px;width:162px;text-align:right;">4</div>

<div class="t" style="left:144px;top:499px;font-size:39px;font-weight:bold;letter-spacing:1.6px;color:#1E8CFA;-webkit-text-stroke:0.4px #1E8CFA;">Total</div>
<div class="btn" style="left:371px;top:504px;width:172px;height:36px;"></div>
<div class="t dlg" style="left:371px;top:511px;width:172px;text-align:center;">Clear Tics</div>

<div class="t dlg" style="left:83px;top:598px;">Impress</div>
<div class="tf" style="left:195px;top:587px;width:421px;height:34px;"></div>
<div class="t dlg" style="left:202px;top:593px;">Files\LibreOffice\program\soffice.exe</div>
<div class="t dlg" style="left:85px;top:637px;">Options</div>
<div class="tf" style="left:195px;top:642px;width:185px;height:34px;"></div>
<div class="t dlg" style="left:198px;top:648px;">-impress --show</div>
<div class="t dlg" style="left:59px;top:700.5px;font-size:24.7px;">ShowPath</div>
<div class="tf" style="left:195px;top:694px;width:421px;height:34px;">
<div class="t dlg" style="right:4px;top:5.5px;">eOffice\ChainTests\ShowTestOne.odp</div>
</div>

<div class="btn" style="left:195px;top:748px;width:171px;height:35px;"></div>
<div class="a" style="left:220px;top:749px;width:123px;height:32px;border:1px solid #9AAABA;box-sizing:border-box;"></div>
<div class="t dlg" style="left:195px;top:752px;width:171px;text-align:center;">Start Show</div>
<div class="btn" style="left:391px;top:748px;width:172px;height:35px;"></div>
<div class="t dlg" style="left:391px;top:752px;width:172px;text-align:center;">Stop Show</div>

</body></html>
